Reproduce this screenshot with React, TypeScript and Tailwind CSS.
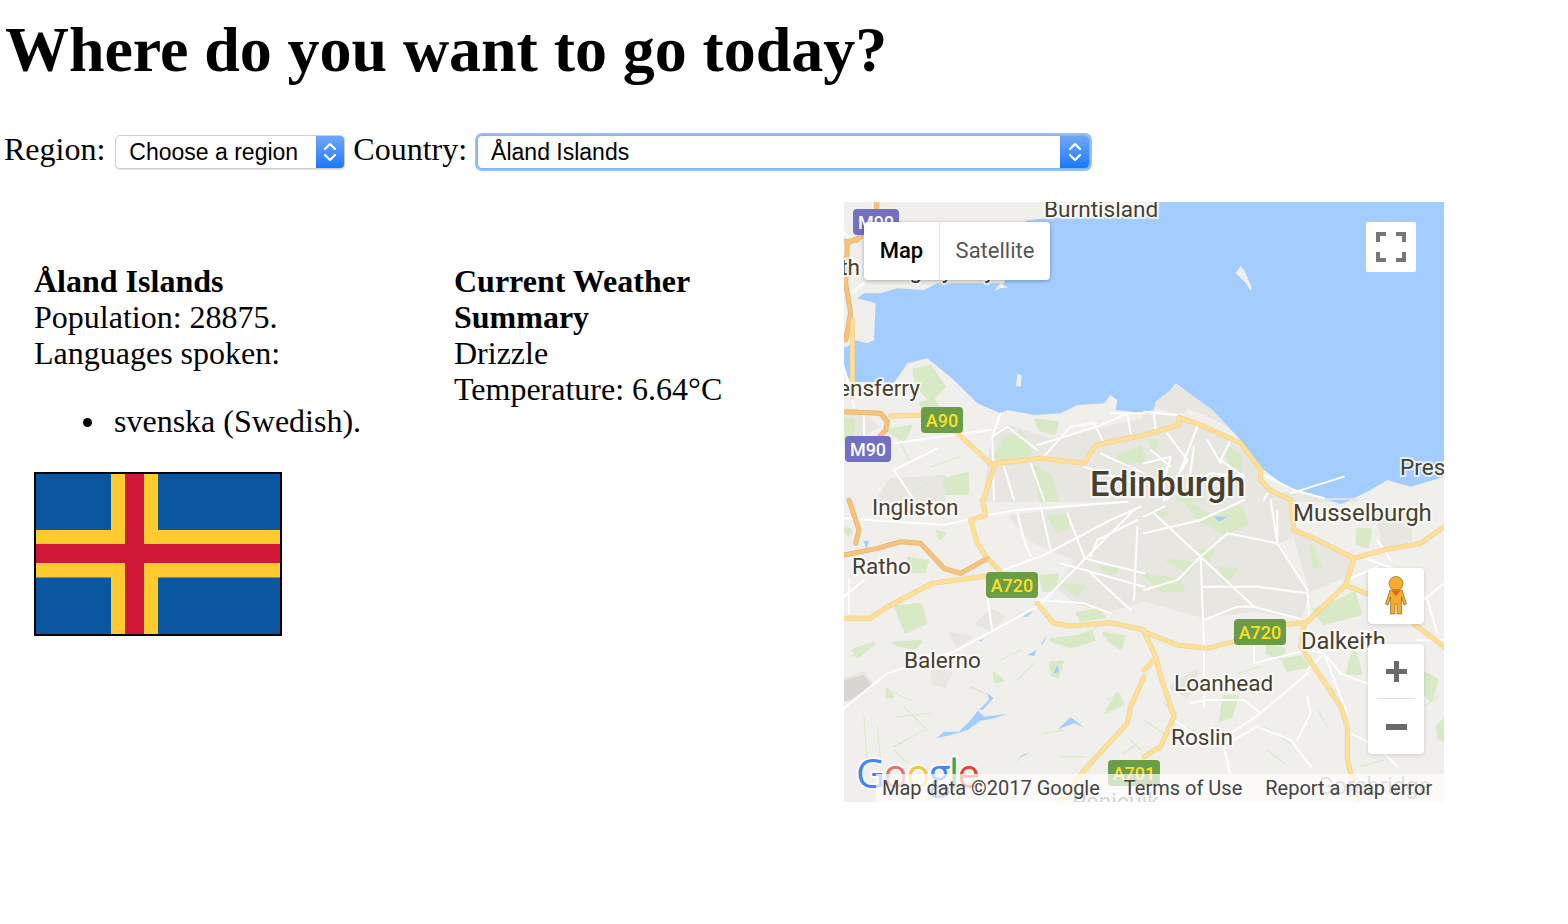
import React from "react";

const Q = [
  "translate(0 -2) scale(.33333)",
  "translate(300 -2) scale(.33333)",
  "translate(0 298) scale(.33333)",
  "translate(300 298) scale(.33333)",
];

const waterQ1 =
  "M901 50 L600 55 L545 62 L540 90 L480 250 L430 250 L280 250 L240 270 L160 265 L110 280 L60 280 L40 295 L95 310 L90 420 L70 430 L30 420 L10 440 L0 440 L0 510 L20 545 L150 548 L190 490 L250 475 L330 540 L400 610 L470 640 L490 630 L570 645 L650 640 L700 615 L780 610 L800 585 L820 600 L815 630 L901 640 Z";
const waterQ2 =
  "M-1 50 L40 50 L45 6 L900 6 L900 830 L800 860 L730 840 L680 870 L630 895 L540 895 L440 870 L360 810 L290 720 L205 630 L150 590 L95 550 L80 570 L35 605 L30 630 L-1 635 Z";

const urbanQ: string[] = [
  "M450 700 L490 680 L620 720 L760 690 L900 660 L900 900 L420 900 Z M0 640 L40 630 L100 680 L30 720 L0 720 Z M100 900 L140 840 L300 830 L300 900 Z",
  "M0 640 L110 650 L220 700 L340 790 L360 860 L440 900 L0 900 Z M420 880 L540 895 L600 880 L640 900 L420 900 Z",
  "M500 50 L900 0 L900 300 L800 330 L700 310 L640 260 L700 180 L560 120 Z M400 370 L440 330 L480 350 L440 390 Z M320 400 L380 410 L340 440 Z M265 510 L320 520 L300 560 L270 550 Z M0 540 L60 520 L80 550 L20 600 L0 590 Z",
  "M0 0 L440 0 L450 100 L400 130 L490 280 L470 350 L330 330 L180 350 L0 300 Z M450 100 L620 170 L600 230 L500 270 Z M700 40 L800 20 L800 120 L720 140 Z M370 240 L450 230 L470 280 Z M80 560 L160 510 L130 590 Z",
];

const greenQ: string[] = [
  "M575 660 L640 670 L630 700 L590 690 Z M480 720 L530 695 L560 760 L500 780 L450 770 Z M820 770 L890 740 L900 780 L830 790 Z M570 800 L620 830 L640 900 L590 900 Z M210 510 L260 500 L300 560 L260 600 L220 560 Z M0 660 L30 660 L25 720 L0 720 Z M300 840 L370 820 L370 880 L310 880 Z M230 610 L270 600 L290 640 L250 650 Z M130 690 L200 680 L180 720 Z",
  "M250 740 L290 770 L290 810 L255 800 Z M15 720 L40 725 L30 750 Z M100 890 L150 880 L170 900 L100 900 Z",
  "M615 50 L670 45 L670 85 L640 95 Z M155 320 L230 315 L245 370 L185 395 Z M195 175 L250 185 L240 215 L205 215 Z M590 230 L640 225 L630 270 L600 270 Z M660 255 L720 260 L700 285 Z M770 200 L820 210 L800 220 Z M780 400 L840 410 L830 445 L800 425 Z M620 420 L700 410 L740 395 L750 420 L680 440 Z M150 430 L230 425 L210 445 Z M0 85 L20 90 L15 105 Z M280 95 L300 100 L290 115 Z M700 340 L760 330 L780 350 L710 360 Z M620 490 L655 485 L640 530 L625 525 Z M820 580 L835 610 L790 630 Z M30 450 L90 430 L40 470 Z M130 570 L145 590 L130 590 Z M450 520 L475 540 L455 545 Z",
  "M120 0 L200 50 L290 20 L310 70 L240 100 L160 50 Z M0 225 L100 240 L120 270 L50 270 Z M70 180 L150 190 L130 215 Z M230 205 L275 210 L240 245 Z M170 150 L210 150 L190 185 Z M510 330 L590 300 L630 280 L650 340 L540 370 Z M370 430 L420 450 L410 475 L370 460 Z M420 480 L470 470 L490 500 L430 510 Z M630 450 L650 520 L610 520 Z M500 140 L530 200 L510 200 Z M640 90 L680 90 L670 140 L640 130 Z M240 590 L280 590 L260 650 L230 660 Z M20 35 L70 40 L50 50 Z M880 680 L900 660 L900 720 L885 715 Z M820 510 L880 540 L860 600 L820 560 Z M720 590 L760 600 L720 620 Z",
];

const hedgeQ: string[] = [
  "M150 690 L200 790 M260 800 L350 770 M200 880 L250 850",
  "M20 780 L60 800 M140 770 L170 790",
  "M60 650 L70 790 M100 680 L110 780 M150 740 L240 690 M180 620 L250 690 M160 650 L260 640 M150 750 L190 790 M130 570 L200 600 M380 560 L440 590 M470 480 L530 450 M520 540 L570 490 M600 700 L660 690 M650 770 L720 770 M790 600 L830 580 M780 640 L830 620 M860 720 L890 750 M840 760 L880 730 M20 470 L80 440 M720 410 L760 380",
  "M60 610 L100 640 M120 680 L170 700 M360 680 L440 730 M520 630 L550 680 M370 750 L420 790 M560 560 L600 590 M700 700 L760 720 M650 800 L720 780 M0 660 L60 700 M280 520 L350 500 M510 140 L530 210 M840 620 L880 590",
];

const lochQ: string[] = [
  "",
  "",
  "M278 715 L300 695 L345 695 L380 660 L402 632 L420 650 L490 642 L450 655 L410 662 L370 690 L320 705 Z M402 632 L435 600 L430 578 L448 595 L418 628 Z M550 465 L578 450 L570 468 Z M590 435 L610 402 L598 430 Z M628 522 L640 495 L645 515 Z M642 688 L680 652 L720 682 L690 670 Z M508 790 L535 765 L558 758 L530 772 Z M58 122 L75 122 L68 148 Z M405 420 L420 418 L410 425 Z M535 350 L570 330 L550 350 Z",
  "M210 50 L250 50 L225 65 Z M555 0 L620 0 L590 12 Z",
];

const whites: string[] = [
  "M450 900 L445 710 L490 680 L580 750 M480 800 L510 900 M590 780 L680 680 L750 670 L780 730 M560 790 L600 900 M580 735 L760 680 L850 640 L860 700 M150 730 L440 690 M280 745 L150 810 L210 900 M800 640 L900 640 M0 500 L30 620 M60 630 L60 720 M0 95 L20 120 M20 280 L60 250 M470 640 L445 710 M770 760 L900 820 M720 800 L900 860",
  "M0 635 L95 645 L105 650 M30 640 L35 700 M70 700 L130 780 L60 900 M160 680 L90 860 L70 900 M0 790 L80 770 L60 840 M190 720 L230 790 M150 740 L130 880 M260 720 L230 780 L300 830 L200 820 L130 860 M350 820 L450 870 L540 895 M20 750 L80 800 M370 880 L360 900 M440 880 L600 830",
  "M0 55 L300 75 L430 45 L520 30 L850 5 M465 215 L600 165 L800 60 M0 625 L130 520 L330 455 L580 320 L720 180 L870 30 M520 40 L540 120 L560 170 M590 20 L620 150 M670 40 L720 170 M720 175 L900 220 M730 210 L860 330 M580 300 L720 310 L800 340 M880 80 L870 300 M430 290 L445 390 M800 60 L890 20 M0 290 L60 240 M15 240 L15 340 M740 170 L760 120 L880 60 M650 190 L900 260",
  "M0 100 L170 60 L300 0 M30 40 L170 170 L180 440 L180 620 M170 170 L330 320 L480 360 M170 170 L250 100 L400 130 L490 270 L495 350 M400 130 L400 30 M180 260 L340 260 L490 280 M0 270 L100 240 L170 170 M180 360 L280 320 L340 320 M330 440 L330 490 L490 450 L540 460 M260 700 L350 640 L490 520 M490 510 L540 460 L590 520 L800 600 M540 460 L610 640 M250 730 L340 680 L440 720 L500 800 M90 660 L180 720 L240 740 L260 830 M140 610 L180 600 L300 600 L350 640 M460 720 L500 640 L490 590 M650 170 L760 210 L850 300 L880 400 M610 240 L700 200 M0 50 L60 20 M620 700 L700 740 L760 800 M840 300 L900 250 M820 420 L900 420 M380 0 L400 130 M700 120 L740 180 M720 640 L820 620",
];

const yellows: string[] = [
  "M140 648 L235 645 M330 690 L440 792 L590 775 L720 790 L755 735 L900 705 M452 795 L418 900 M25 360 L25 590",
  "M0 705 L105 675 L105 652 L170 675 L290 730 L350 810 L350 840 L380 872 L440 900",
  "M415 0 L425 45 L380 60 L400 130 L430 175 L470 215 M0 355 L80 355 L130 320 L265 250 L430 228 M580 310 L630 370 L680 378 L800 368 L900 390 M900 530 L860 620 L850 670 L730 800 L650 900",
  "M440 0 L450 90 L520 120 L630 175 L720 150 L830 130 L900 80 M630 175 L605 255 L490 365 L420 375 M270 425 L190 445 L100 435 L0 395 M610 258 L680 285 M810 372 L900 440 M480 375 L470 440 L590 620 L610 680 L610 780 L640 900 M0 395 L35 470 L50 530 L90 650 L50 740 L0 770 M30 480 L0 510",
];

const oranges: string[] = [
  "M98 0 L98 40 M50 110 L10 130 L5 250 L20 340 L5 420 M0 635 L110 640 L130 665 L125 690 L90 730 M0 125 L40 120",
  "",
  "M15 0 L45 90 L35 130 M0 165 L100 145 L170 125 L230 130 L300 205 L350 220 L430 175",
  "",
];

function Layer({ paths, stroke, width }: { paths: string[]; stroke: string; width: number }) {
  return (
    <>
      {paths.map((d, i) => (
        <g key={i} transform={Q[i]}>
          <path d={d} fill="none" stroke={stroke} strokeWidth={width} strokeLinejoin="round" strokeLinecap="round" />
        </g>
      ))}
    </>
  );
}

function Fill({ paths, fill, soft }: { paths: string[]; fill: string; soft?: boolean }) {
  return (
    <>
      {paths.map((d, i) => (
        <g key={i} transform={Q[i]}>
          <path d={d} fill={fill} stroke={soft ? fill : "none"} strokeWidth={soft ? 10 : 0} strokeLinejoin="round" />
        </g>
      ))}
    </>
  );
}

function Shield({ x, y, w, h, label, color, text }: { x: number; y: number; w: number; h: number; label: string; color: string; text: string }) {
  return (
    <>
      <rect x={x} y={y} width={w} height={h} rx={4} fill={color} />
      <text x={x + w / 2} y={y + h / 2 + 6.5} textAnchor="middle" fontSize={18} fontWeight={500} fill={text} fontFamily="Roboto, sans-serif">
        {label}
      </text>
    </>
  );
}

function Label({ x, y, t, size = 22.6, weight = 400 }: { x: number; y: number; t: string; size?: number; weight?: number }) {
  return (
    <text
      x={x}
      y={y}
      fontSize={size}
      fontWeight={weight}
      fill="#47402f"
      stroke="#ffffff"
      strokeOpacity={0.7}
      strokeWidth={4}
      paintOrder="stroke"
      fontFamily="Roboto, sans-serif"
    >
      {t}
    </text>
  );
}

function MapArt() {
  return (
    <svg width="600" height="600" viewBox="0 0 600 600" className="block">
      <rect width="600" height="600" fill="#f0efec" />
      <Fill paths={urbanQ} fill="#e8e6e1" soft />
      <Fill paths={greenQ} fill="#d8e9c6" soft />
      <Layer paths={hedgeQ} stroke="#dcebcb" width={4} />
      <g transform={Q[0]}>
        <path d={waterQ1} fill="#a3ccff" />
        <path d="M450 272 L470 250 L492 262 L470 265 Z M516 558 L520 522 L533 525 L530 560 Z M592 388 L602 398 L596 392 Z" fill="#f0efec" />
      </g>
      <g transform={Q[1]}>
        <path d={waterQ2} fill="#a3ccff" />
        <path d="M275 220 L290 198 L302 212 L323 262 L320 272 L302 245 Z" fill="#f0efec" />
        <path d="M30 625 L35 605 L80 570 L92 552 L150 590 L205 630 L250 680 L190 650 L130 625 L125 640 L95 640 Z" fill="#e8e6e1" />
      </g>
      <Fill paths={lochQ} fill="#a3ccff" />
      <path d="M0 478 L20 473 L27 483 L8 497 L0 500 Z" fill="#d9d5d0" />
      <Layer paths={whites} stroke="#ffffff" width={6} />
      <Layer paths={yellows} stroke="#efcf8e" width={15} />
      <Layer paths={oranges} stroke="#e4b070" width={15} />
      <Layer paths={yellows} stroke="#fddf98" width={12} />
      <Layer paths={oranges} stroke="#f6c27c" width={11} />
      <Shield x={9} y={7} w={46} h={26} label="M90" color="#7270c5" text="#ffffff" />
      <Shield x={1} y={234} w={46} h={26} label="M90" color="#7270c5" text="#ffffff" />
      <Shield x={77} y={205} w={42} h={26} label="A90" color="#6a9d46" text="#fddd2c" />
      <Shield x={142} y={370} w={52} h={26} label="A720" color="#6a9d46" text="#fddd2c" />
      <Shield x={390} y={417} w={52} h={26} label="A720" color="#6a9d46" text="#fddd2c" />
      <Shield x={264} y={558} w={52} h={26} label="A701" color="#6a9d46" text="#fddd2c" />
      <Label x={200} y={15} t="Burntisland" />
      <Label x={-53} y={73} t="Rosyth" />
      <Label x={33} y={76} t="Dalgety Bay" />
      <Label x={-46} y={194} t="Queensferry" />
      <Label x={556} y={273} t="Prestonpans" />
      <Label x={246} y={294} t="Edinburgh" size={34.4} weight={500} />
      <Label x={28} y={313} t="Ingliston" />
      <Label x={449} y={319} t="Musselburgh" size={24} />
      <Label x={8} y={372} t="Ratho" />
      <Label x={457} y={447} t="Dalkeith" size={23.6} />
      <Label x={60} y={466} t="Balerno" />
      <Label x={330} y={489} t="Loanhead" />
      <Label x={327} y={543} t="Roslin" />
      <text x={228} y={608} fontSize={23} fill="#777" fontFamily="Roboto, sans-serif">Penicuik</text>
      <text x={474} y={592} fontSize={23} fill="#999" fontFamily="Roboto, sans-serif">Gorebridge</text>
      <text
        x={12}
        y={586}
        fontSize={40}
        fontWeight={500}
        stroke="#ffffff"
        strokeOpacity={0.7}
        strokeWidth={4}
        paintOrder="stroke"
        fontFamily="'Open Sans', sans-serif"
        letterSpacing={-1.5}
      >
        <tspan fill="#4285f4">G</tspan>
        <tspan fill="#e8736b">o</tspan>
        <tspan fill="#f6c343">o</tspan>
        <tspan fill="#4285f4">g</tspan>
        <tspan fill="#34a853">l</tspan>
        <tspan fill="#ea4335">e</tspan>
      </text>
    </svg>
  );
}

function Chevrons() {
  return (
    <svg width="14" height="24" viewBox="0 0 14 24" fill="none" stroke="#ffffff" strokeWidth="2.2" strokeLinecap="round" strokeLinejoin="round">
      <path d="M2 9 L7 4 L12 9" />
      <path d="M2 15 L7 20 L12 15" />
    </svg>
  );
}

function SelectBox({ label, className, focus }: { label: string; className: string; focus?: boolean }) {
  return (
    <div
      className={`flex items-stretch h-[34px] rounded-[5px] border bg-white overflow-hidden font-['Liberation_Sans',sans-serif] text-[23px] leading-none ${
        focus ? "border-[#7fb2f2] ring-[2px] ring-[#94c0f5]" : "border-[#cfcfcf] shadow-[0_1px_1px_rgba(0,0,0,0.12)]"
      } ${className}`}
    >
      <div className="flex-1 flex items-center pl-[13px] text-black">{label}</div>
      <div className={`${focus ? "w-[29px]" : "w-[28px]"} flex items-center justify-center bg-gradient-to-b from-[#6ea7f6] to-[#1677fe]`}>
        <Chevrons />
      </div>
    </div>
  );
}

export default function App() {
  return (
    <div className="relative w-[1568px] h-[924px] bg-white text-black font-['Liberation_Serif',serif] text-[32px] leading-[36px] overflow-hidden">
      <h1 className="pt-[13px] pl-[5px] text-[64px] leading-[74px] font-bold tracking-[-0.07px]">Where do you want to go today?</h1>
      <div className="mt-[46px] pl-1 h-[38px] flex items-center">
        <label className="mr-[10px] relative -top-[3px]">Region:</label>
        <SelectBox label="Choose a region" className="w-[230px]" />
        <label className="ml-2 mr-[10px] relative -top-[3px]">Country:</label>
        <SelectBox label="Åland Islands" className="w-[613px]" focus />
      </div>
      <div className="mt-[31px] flex items-start">
        <div className="w-[420px] ml-[34px] pt-[61px] shrink-0">
          <div className="font-bold">Åland Islands</div>
          <div>Population: 28875.</div>
          <div>Languages spoken:</div>
          <ul className="pl-[49px] mt-[32px] mb-[33px]">
            <li className="flex items-center gap-[22px]">
              <span className="w-[9px] h-[9px] rounded-full bg-black mt-[3px]" />
              <span>svenska (Swedish).</span>
            </li>
          </ul>
          <svg width="248" height="164" viewBox="0 0 248 164" className="block">
            <rect width="248" height="164" fill="#000000" />
            <rect x="2" y="2" width="244" height="160" fill="#0b56a0" />
            <rect x="77" y="2" width="47" height="160" fill="#ffcb2e" />
            <rect x="2" y="58" width="244" height="47.5" fill="#ffcb2e" />
            <rect x="91" y="2" width="19" height="160" fill="#d0173a" />
            <rect x="2" y="72" width="244" height="19" fill="#d0173a" />
          </svg>
        </div>
        <div className="w-[390px] pt-[61px] shrink-0">
          <div className="font-bold">Current Weather</div>
          <div className="font-bold">Summary</div>
          <div>Drizzle</div>
          <div>Temperature: 6.64°C</div>
        </div>
        <div className="relative w-[600px] h-[600px] overflow-hidden font-['Roboto',sans-serif]">
          <MapArt />
          <div className="absolute left-[20px] top-[20px] w-[186px] h-[58px] flex rounded-[4px] bg-white shadow-[0_1px_4px_rgba(0,0,0,0.3)] text-[22px] leading-none">
            <div className="w-[76px] flex items-center justify-center font-medium text-black border-r border-[#e6e6e6]">Map</div>
            <div className="flex-1 flex items-center justify-center text-[#565656]">Satellite</div>
          </div>
          <div className="absolute left-[522px] top-[20px] w-[50px] h-[50px] rounded-[2px] bg-white flex items-center justify-center">
            <svg width="30" height="30" viewBox="0 0 30 30" fill="none" stroke="#777777" strokeWidth="4">
              <path d="M2 10 V2 H10 M20 2 H28 V10 M28 20 V28 H20 M10 28 H2 V20" />
            </svg>
          </div>
          <div className="absolute left-[524px] top-[366px] w-[56px] h-[56px] rounded-[4px] bg-white flex items-center justify-center shadow-[0_1px_4px_rgba(0,0,0,0.15)]">
            <svg width="24" height="40" viewBox="0 0 24 40">
              <circle cx="12" cy="7.5" r="7" fill="#f9ab2c" stroke="#8a6a2a" strokeWidth=".7" />
              <path d="M6 14 H18 L22.5 28 L20 29 L17.5 21 V38 H13 V28 H11 V38 H6.5 V21 L4 29 L1.5 28 Z" fill="#f9ab2c" stroke="#8a6a2a" strokeWidth=".7" />
              <path d="M7.5 14.5 H16.5 L12 20 Z" fill="#d9641e" />
            </svg>
          </div>
          <div className="absolute left-[524px] top-[442px] w-[56px] h-[110px] rounded-[4px] bg-white shadow-[0_1px_4px_rgba(0,0,0,0.15)] flex flex-col items-center">
            <div className="h-[54px] pl-px flex items-center justify-center">
              <svg width="21" height="21" viewBox="0 0 21 21" fill="#6a6a6a">
                <path d="M8 0 H13 V8 H21 V13 H13 V21 H8 V13 H0 V8 H8 Z" />
              </svg>
            </div>
            <div className="w-[38px] h-px bg-[#e0e0e0]" />
            <div className="h-[55px] pl-px flex items-center justify-center">
              <div className="w-[21px] h-[6px] bg-[#6a6a6a]" />
            </div>
          </div>
          <div className="absolute right-0 bottom-0 left-[32px] h-[28px] bg-white/70 flex items-center text-[20px] leading-none text-[#444444] whitespace-nowrap">
            <span className="ml-[6px]">Map data ©2017 Google</span>
            <span className="ml-[24px]">Terms of Use</span>
            <span className="ml-[23px]">Report a map error</span>
          </div>
        </div>
      </div>
    </div>
  );
}
